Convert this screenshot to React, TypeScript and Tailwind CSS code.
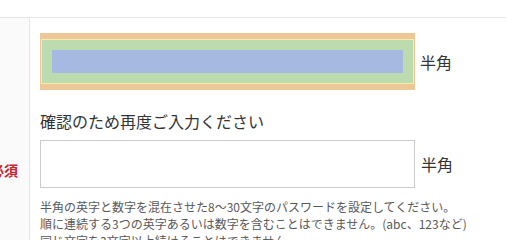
import React from "react";

export default function App() {
  const font = { fontFamily: '"Noto Sans CJK JP", "Noto Sans", sans-serif' };
  return (
    <div
      className="w-[506px] h-[240px] overflow-hidden bg-white text-[#333]"
      style={font}
    >
      <div className="h-[17px] bg-white" />
      <div className="flex border-t border-[#e6e6e6] h-[223px]">
        <div className="w-[30px] shrink-0 bg-[#fafafb] border-r border-[#e6e6e6] flex justify-end pr-[11px]">
          <div className="mt-[142px] whitespace-nowrap text-[14px] leading-[20px] font-bold text-[#c4262e]">
            必須
          </div>
        </div>
        <div className="flex-1 pl-[10px] pt-[15px]">
          <div className="flex items-center">
            <div className="w-[375px] bg-[#edc797] py-[6px] px-[1px]">
              <div className="border border-[#f6eda6] bg-[#bcdcb0] p-[10px]">
                <div className="h-[23px] bg-[#a6b9e0]" />
              </div>
            </div>
            <span className="ml-[5px] text-[16px] leading-[24px]">半角</span>
          </div>
          <div className="mt-[19px] text-[16px] leading-[24px]">
            確認のため再度ご入力ください
          </div>
          <div className="mt-[7px] flex items-center">
            <div className="w-[375px] h-[48px] border border-[#cccccc] bg-white" />
            <span className="ml-[6px] text-[16px] leading-[24px]">半角</span>
          </div>
          <div className="mt-[10px] text-[12px] leading-[17px] text-[#595959] whitespace-nowrap">
            <p>半角の英字と数字を混在させた8〜30文字のパスワードを設定してください。</p>
            <p>順に連続する3つの英字あるいは数字を含むことはできません。(abc、123など)</p>
            <p>同じ文字を3文字以上続けることはできません。</p>
          </div>
        </div>
      </div>
    </div>
  );
}
